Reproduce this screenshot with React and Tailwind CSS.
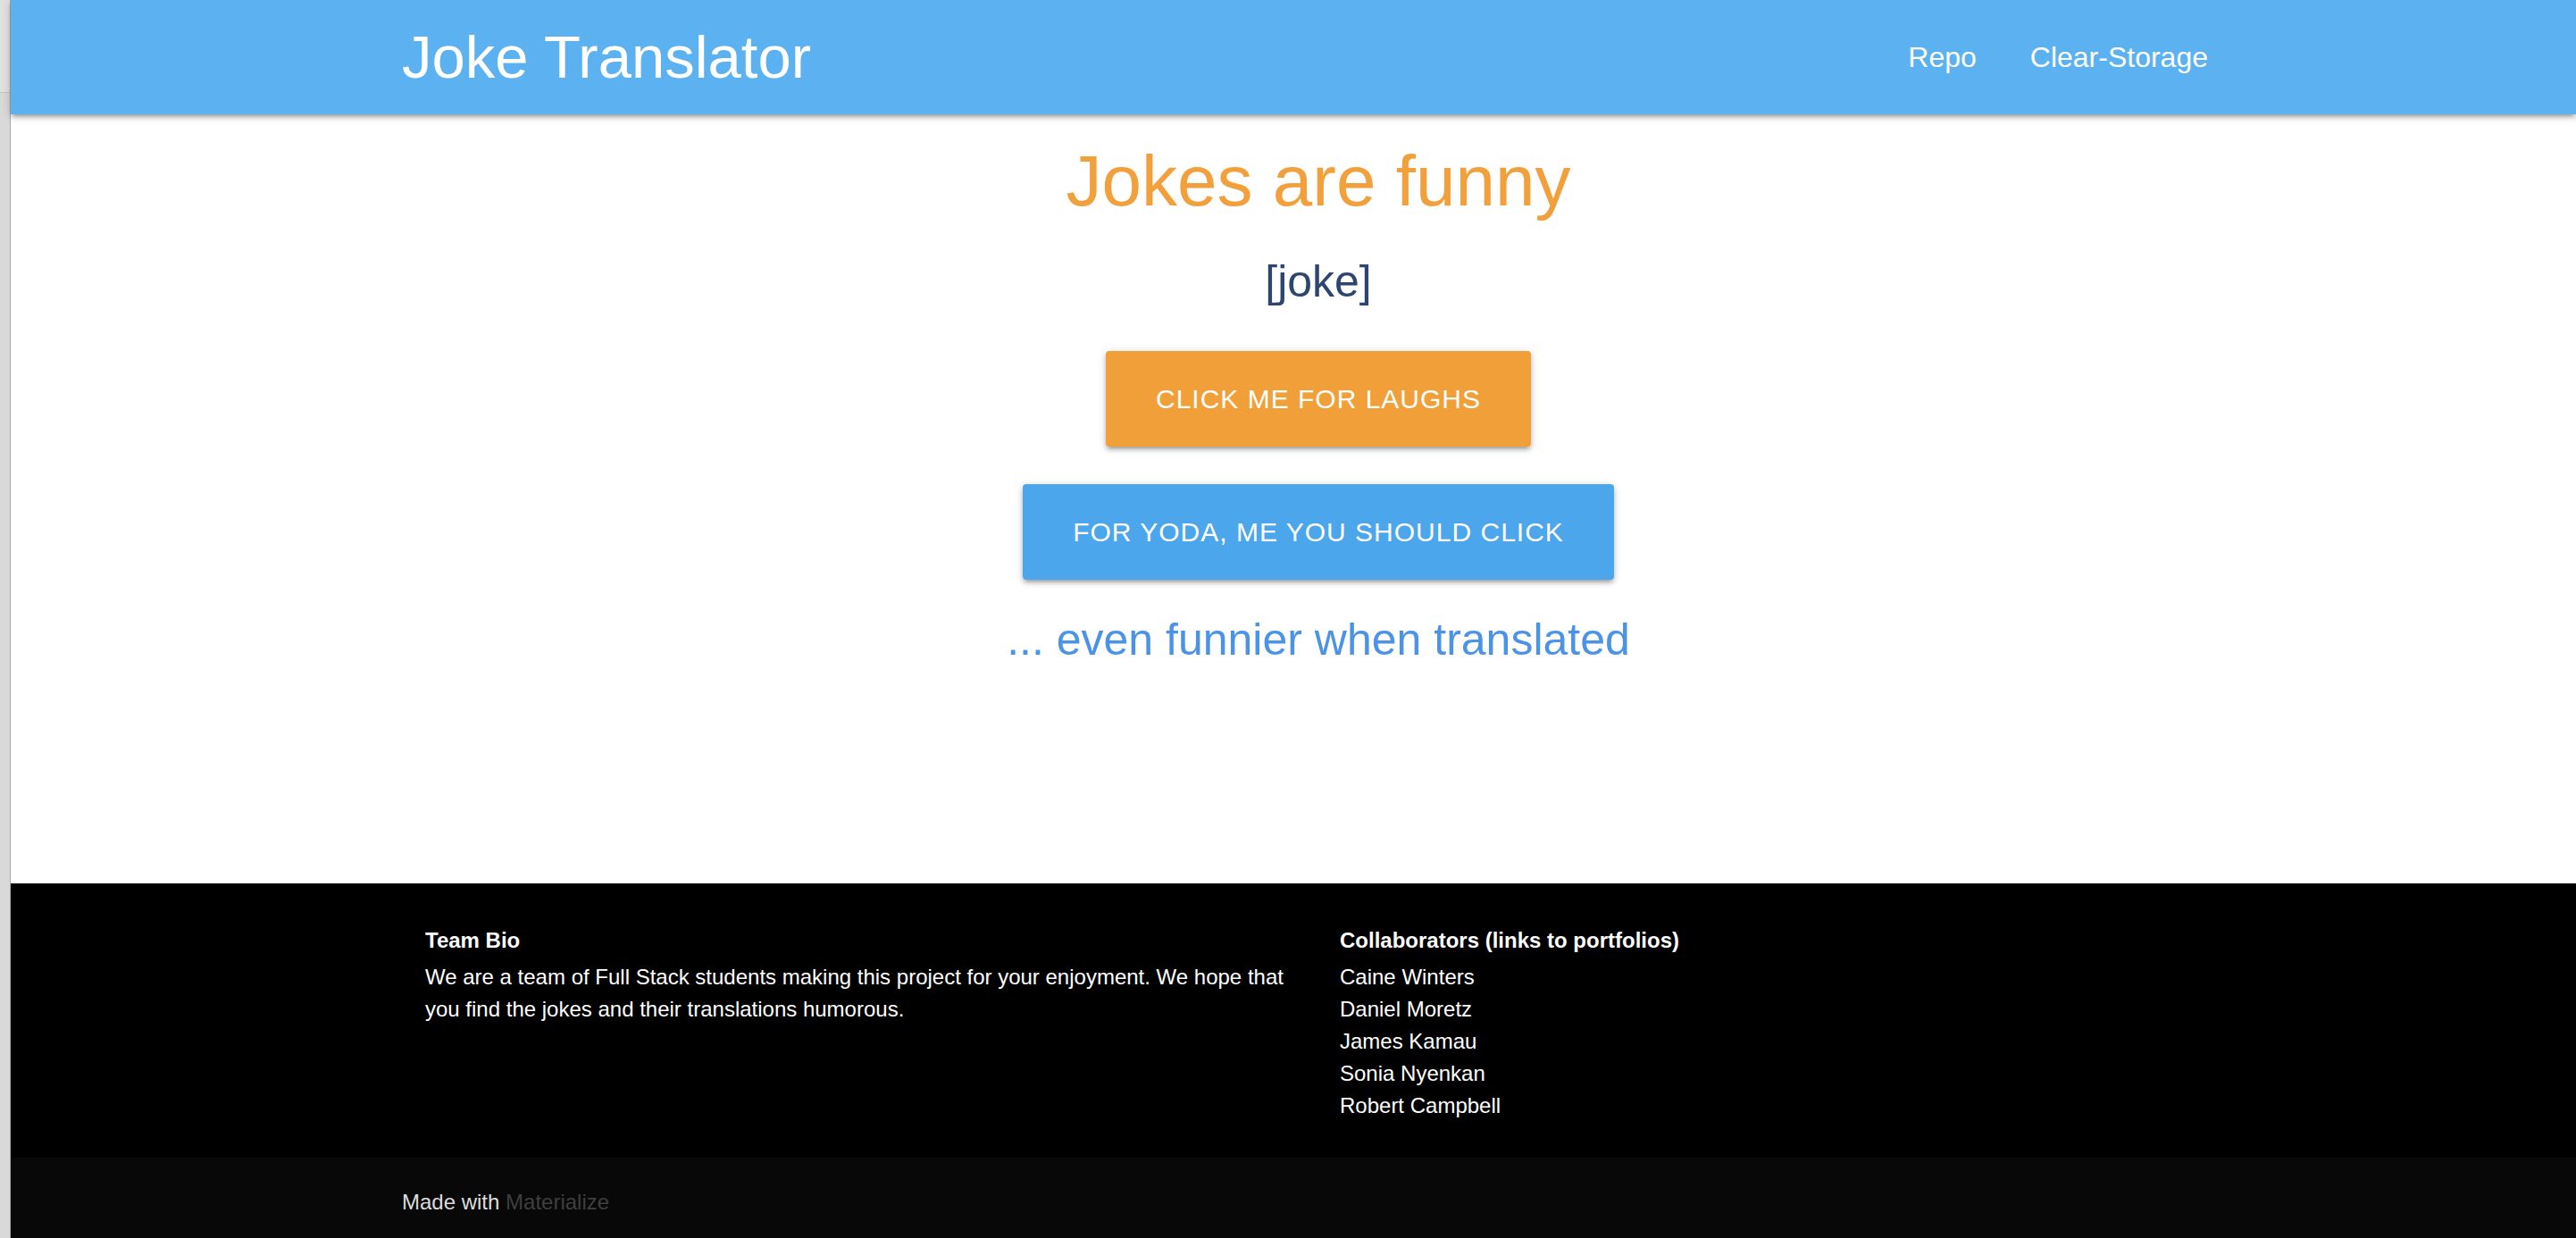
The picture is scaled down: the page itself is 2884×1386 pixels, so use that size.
export default function App() {
  const collaborators = [
    "Caine Winters",
    "Daniel Moretz",
    "James Kamau",
    "Sonia Nyenkan",
    "Robert Campbell",
  ];

  return (
    <div className="flex min-h-screen w-full font-['Liberation_Sans',Arial,sans-serif]">
      {/* window edge */}
      <div className="flex w-[12px] shrink-0 flex-col border-r border-[#a9a9a9]">
        <div className="h-[104px] border-b border-[#c4c4c4] bg-[#e1e1e1]"></div>
        <div className="flex-1 bg-[#d9d9d9]"></div>
      </div>

      <div className="flex min-w-0 flex-1 flex-col">
        {/* Navbar */}
        <nav className="relative z-10 h-[128px] bg-[#5cb2f0] text-white shadow-[0_4px_4px_0_rgba(0,0,0,0.14),0_6px_2px_-4px_rgba(0,0,0,0.12),0_2px_10px_0_rgba(0,0,0,0.2)]">
          <div className="ml-[438px] flex w-[2052px] items-center justify-between">
            <a href="#" className="text-[67px] leading-[128px]">
              Joke Translator
            </a>
            <ul className="flex">
              <li>
                <a href="#" className="block px-[30px] text-[32px] leading-[128px]">
                  Repo
                </a>
              </li>
              <li>
                <a href="#" className="block px-[30px] text-[32px] leading-[128px]">
                  Clear-Storage
                </a>
              </li>
            </ul>
          </div>
        </nav>

        {/* Main */}
        <main className="h-[861px] bg-white">
          <div className="ml-[438px] flex w-[2052px] flex-col items-center">
            <h3 className="mt-[31px] text-[80px] leading-[88px] text-[#f2a03b]">
              Jokes are funny
            </h3>
            <p className="mt-[39px] text-[50px] leading-[58px] text-[#2d4570]">[joke]</p>
            <button className="mt-[49px] h-[107px] rounded-[4px] bg-[#f19f38] px-[56px] text-[30px] tracking-[1px] text-white shadow-[0_4px_4px_0_rgba(0,0,0,0.14),0_6px_2px_-4px_rgba(0,0,0,0.12),0_2px_10px_0_rgba(0,0,0,0.2)]">
              CLICK ME FOR LAUGHS
            </button>
            <button className="mt-[42px] h-[107px] rounded-[4px] bg-[#4ca6ec] px-[56px] text-[30px] tracking-[1px] text-white shadow-[0_4px_4px_0_rgba(0,0,0,0.14),0_6px_2px_-4px_rgba(0,0,0,0.12),0_2px_10px_0_rgba(0,0,0,0.2)]">
              FOR YODA, ME YOU SHOULD CLICK
            </button>
            <p className="mt-[38px] text-[50px] leading-[58px] text-[#4b93e6]">
              ... even funnier when translated
            </p>
          </div>
        </main>

        {/* Footer */}
        <footer className="bg-black text-white">
          <div className="ml-[438px] grid w-[2052px] grid-cols-2 pt-[46px] pb-[40px]">
            <div className="px-[26px]">
              <h5 className="text-[24px] font-bold leading-[36px]">Team Bio</h5>
              <p className="mt-[5px] text-[24px] leading-[36px]">
                We are a team of Full Stack students making this project for your enjoyment. We hope
                that you find the jokes and their translations humorous.
              </p>
            </div>
            <div className="px-[24px]">
              <h5 className="text-[24px] font-bold leading-[36px]">
                Collaborators (links to portfolios)
              </h5>
              <ul className="mt-[5px]">
                {collaborators.map((name) => (
                  <li key={name}>
                    <a href="#" className="text-[24px] leading-[36px]">
                      {name}
                    </a>
                  </li>
                ))}
              </ul>
            </div>
          </div>
          <div className="h-[100px] bg-[#080808]">
            <div className="ml-[438px] w-[2052px] text-[24px] leading-[100px] text-[#dcdcdc]">
              Made with{" "}
              <a href="#" className="text-[#3f3f3f]">
                Materialize
              </a>
            </div>
          </div>
        </footer>
      </div>
    </div>
  );
}
